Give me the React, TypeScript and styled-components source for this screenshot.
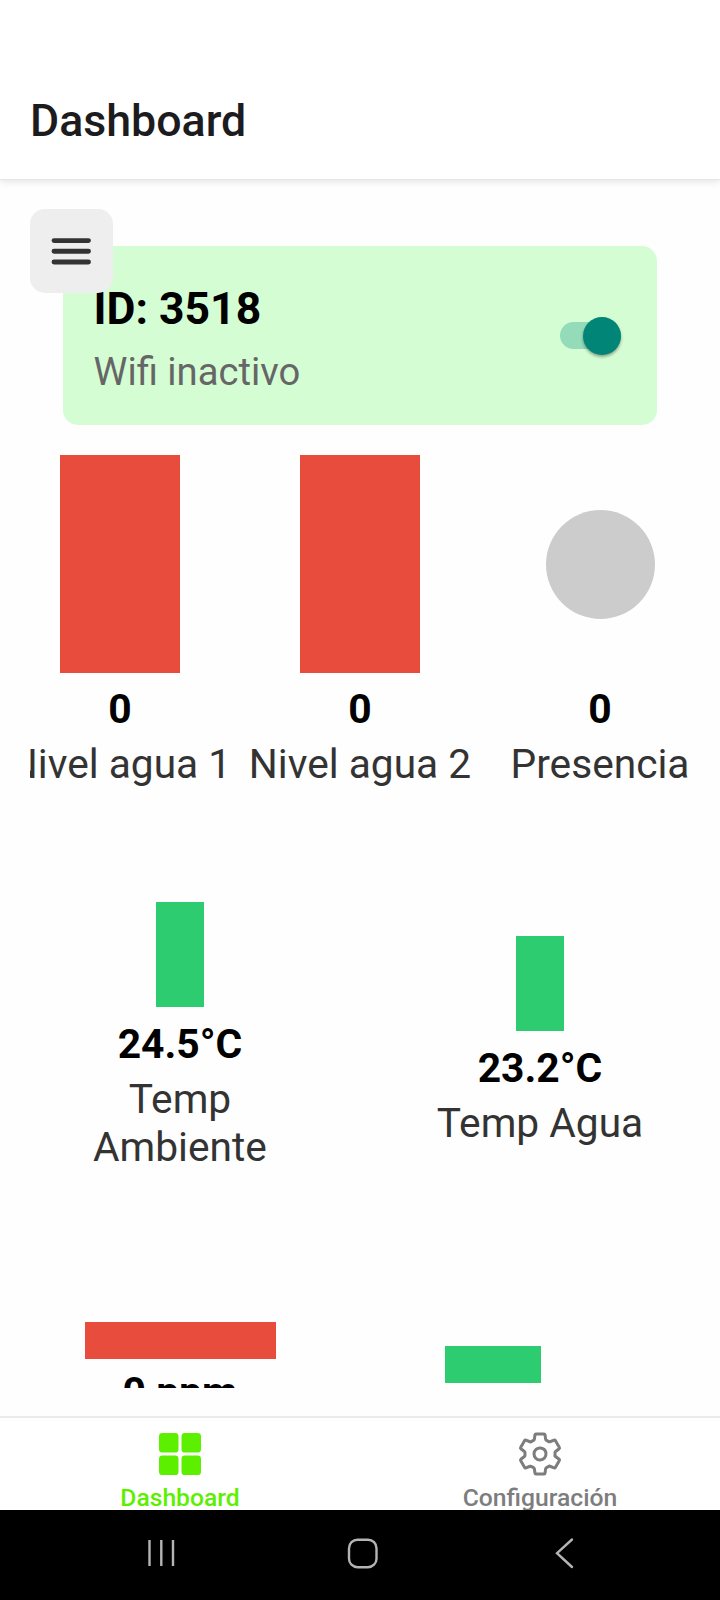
import React from 'react';
import styled, { createGlobalStyle } from 'styled-components';
import { IoGrid, IoMenu, IoSettingsOutline } from 'react-icons/io5';

const RED = '#e74c3c';
const GREEN = '#2ecc71';

const GlobalStyle = createGlobalStyle`
  *, *::before, *::after { box-sizing: border-box; }
  body { margin: 0; background: #fff; font-family: Roboto, sans-serif; }
`;

const Screen = styled.div`
  width: 720px;
  height: 1600px;
  display: flex;
  flex-direction: column;
  overflow: hidden;
  background: #fefefe;
`;

const Header = styled.header`
  flex: none;
  height: 180px;
  padding: 94px 30px 0;
  background: #fff;
  border-bottom: 1px solid #e6e6e6;
  box-shadow: 0 2px 7px rgba(0, 0, 0, 0.1);
`;

const Title = styled.h1`
  margin: 0;
  font-size: 44.7px;
  line-height: 54px;
  font-weight: 500;
  color: #1c1c1e;
`;

const Main = styled.main`
  position: relative;
  flex: none;
  height: 1208px;
  padding: 29px 30px 0;
`;

const MenuButton = styled.button`
  position: absolute;
  z-index: 1;
  top: 29px;
  left: 30px;
  width: 82.5px;
  height: 83.5px;
  display: grid;
  place-items: center;
  padding: 0;
  border: 0;
  border-radius: 15px;
  background: #eee;
  color: #333;
`;

const ScrollArea = styled.div`
  height: 100%;
  padding-top: 37px;
  overflow: hidden;
`;

const DeviceCard = styled.section`
  height: 179px;
  margin: 0 33px 30px;
  padding: 0 36px 0 30.5px;
  display: flex;
  align-items: center;
  justify-content: space-between;
  border-radius: 15px;
  background: #d4fdd4;
`;

const DeviceInfo = styled.div`
  padding-top: 6px;
`;

const DeviceId = styled.div`
  font-size: 44.5px;
  line-height: 53px;
  font-weight: 700;
  color: #000;
`;

const DeviceStatus = styled.div`
  margin-top: 13px;
  font-size: 38.2px;
  line-height: 46px;
  color: #666;
`;

const Switch = styled.button`
  width: 61px;
  height: 38px;
  padding: 0;
  display: flex;
  align-items: center;
  border: 0;
  background: none;
`;

const Track = styled.span`
  flex: 1;
  height: 27px;
  display: flex;
  align-items: center;
  justify-content: flex-end;
  border-radius: 14px;
  background: #94dbb9;
`;

const Thumb = styled.span`
  width: 38px;
  height: 38px;
  border-radius: 50%;
  background: #008577;
  box-shadow: 0 2px 3px rgba(0, 0, 0, 0.35);
`;

const GaugeRow = styled.div<{ $gap?: number; $align?: string }>`
  display: flex;
  align-items: ${p => p.$align ?? 'center'};
  margin: ${p => p.$gap ?? 0}px -30px 0;
`;

const Gauge = styled.div<{ $drop?: number }>`
  flex: 1;
  min-width: 0;
  display: flex;
  flex-direction: column;
  align-items: center;
  padding-top: ${p => p.$drop ?? 0}px;
`;

const Chart = styled.div<{ $align?: string; $height?: number }>`
  width: 191px;
  height: ${p => p.$height ?? 217.5}px;
  display: flex;
  justify-content: center;
  align-items: ${p => p.$align ?? 'flex-end'};
`;

const Bar = styled.div<{ $w: number; $h: number; $color: string }>`
  width: ${p => p.$w}px;
  height: ${p => p.$h}px;
  background: ${p => p.$color};
`;

const LevelTrack = styled.div`
  width: 100%;
  display: flex;
`;

const Dot = styled.div`
  width: 109px;
  height: 109px;
  margin-top: 1px;
  border-radius: 50%;
  background: #ccc;
`;

const Value = styled.div<{ $gap?: number }>`
  margin-top: ${p => p.$gap ?? 13}px;
  font-size: 40.8px;
  line-height: 48px;
  font-weight: 700;
  color: #000;
  white-space: nowrap;
`;

const Label = styled.div<{ $narrow?: boolean }>`
  margin-top: 7px;
  width: ${p => (p.$narrow ? '191px' : 'auto')};
  font-size: 40.7px;
  line-height: 48px;
  color: #333;
  text-align: center;
  white-space: ${p => (p.$narrow ? 'normal' : 'nowrap')};
`;

const TabBar = styled.nav`
  flex: none;
  height: 94px;
  margin-top: 28px;
  display: flex;
  overflow: hidden;
  background: #fff;
  border-top: 2px solid #ebebeb;
`;

const Tab = styled.a<{ $active?: boolean }>`
  flex: 1;
  display: flex;
  flex-direction: column;
  align-items: center;
  padding-top: 12px;
  font-size: 24.7px;
  line-height: 30px;
  font-weight: 500;
  color: ${p => (p.$active ? '#5cf000' : '#7d7d7e')};

  svg { flex: none; margin-bottom: 5px; }
`;

const SystemBar = styled.footer`
  flex: none;
  height: 90px;
  display: flex;
  align-items: center;
  justify-content: space-between;
  padding: 0 145px 4px 146px;
  background: #000;
`;

const SystemIcon = styled.svg`
  width: 30px;
  height: 30px;
  overflow: visible;
  fill: none;
  stroke: #b4b4b4;
  stroke-width: 2.4;
  stroke-linecap: round;
`;

export default function App() {
  return (
    <>
      <GlobalStyle />
      <Screen>
        <Header>
          <Title>Dashboard</Title>
        </Header>
        <Main>
          <MenuButton aria-label="Menu">
            <IoMenu size={52.5} />
          </MenuButton>
          <ScrollArea>
            <DeviceCard>
              <DeviceInfo>
                <DeviceId>ID: 3518</DeviceId>
                <DeviceStatus>Wifi inactivo</DeviceStatus>
              </DeviceInfo>
              <Switch role="switch" aria-checked>
                <Track>
                  <Thumb />
                </Track>
              </Switch>
            </DeviceCard>

            <GaugeRow>
              {['Nivel agua 1', 'Nivel agua 2'].map(name => (
                <Gauge key={name}>
                  <Chart>
                    <Bar $w={120} $h={217.5} $color={RED} />
                  </Chart>
                  <Value $gap={12}>0</Value>
                  <Label>{name}</Label>
                </Gauge>
              ))}
              <Gauge>
                <Chart $align="center">
                  <Dot />
                </Chart>
                <Value $gap={12}>0</Value>
                <Label>Presencia</Label>
              </Gauge>
            </GaugeRow>

            <GaugeRow $gap={2}>
              <Gauge>
                <Chart>
                  <Bar $w={48} $h={105} $color={GREEN} />
                </Chart>
                <Value>24.5°C</Value>
                <Label $narrow>Temp Ambiente</Label>
              </Gauge>
              <Gauge>
                <Chart>
                  <Bar $w={48} $h={95} $color={GREEN} />
                </Chart>
                <Value>23.2°C</Value>
                <Label>Temp Agua</Label>
              </Gauge>
            </GaugeRow>

            <GaugeRow $gap={3} $align="flex-start">
              <Gauge>
                <Chart $height={185}>
                  <LevelTrack>
                    <Bar $w={191} $h={37.5} $color={RED} />
                  </LevelTrack>
                </Chart>
                <Value $gap={9}>0 ppm</Value>
              </Gauge>
              <Gauge $drop={24}>
                <Chart $height={185}>
                  <LevelTrack>
                    <Bar $w={96} $h={37.5} $color={GREEN} />
                  </LevelTrack>
                </Chart>
              </Gauge>
            </GaugeRow>
          </ScrollArea>
        </Main>
        <TabBar>
          <Tab $active>
            <IoGrid size={48} />
            Dashboard
          </Tab>
          <Tab>
            <IoSettingsOutline size={48} />
            Configuración
          </Tab>
        </TabBar>
        <SystemBar>
          <SystemIcon viewBox="0 0 30 30">
            <path d="M3.5 2v26M15.3 2v26M27 2v26" strokeLinecap="butt" />
          </SystemIcon>
          <SystemIcon viewBox="0 0 30 30">
            <rect x="3" y="1.7" width="27.5" height="27.5" rx="8.5" />
          </SystemIcon>
          <SystemIcon viewBox="0 0 30 30">
            <path d="M27 1.5L12 15.2L27 29" />
          </SystemIcon>
        </SystemBar>
      </Screen>
    </>
  );
}
